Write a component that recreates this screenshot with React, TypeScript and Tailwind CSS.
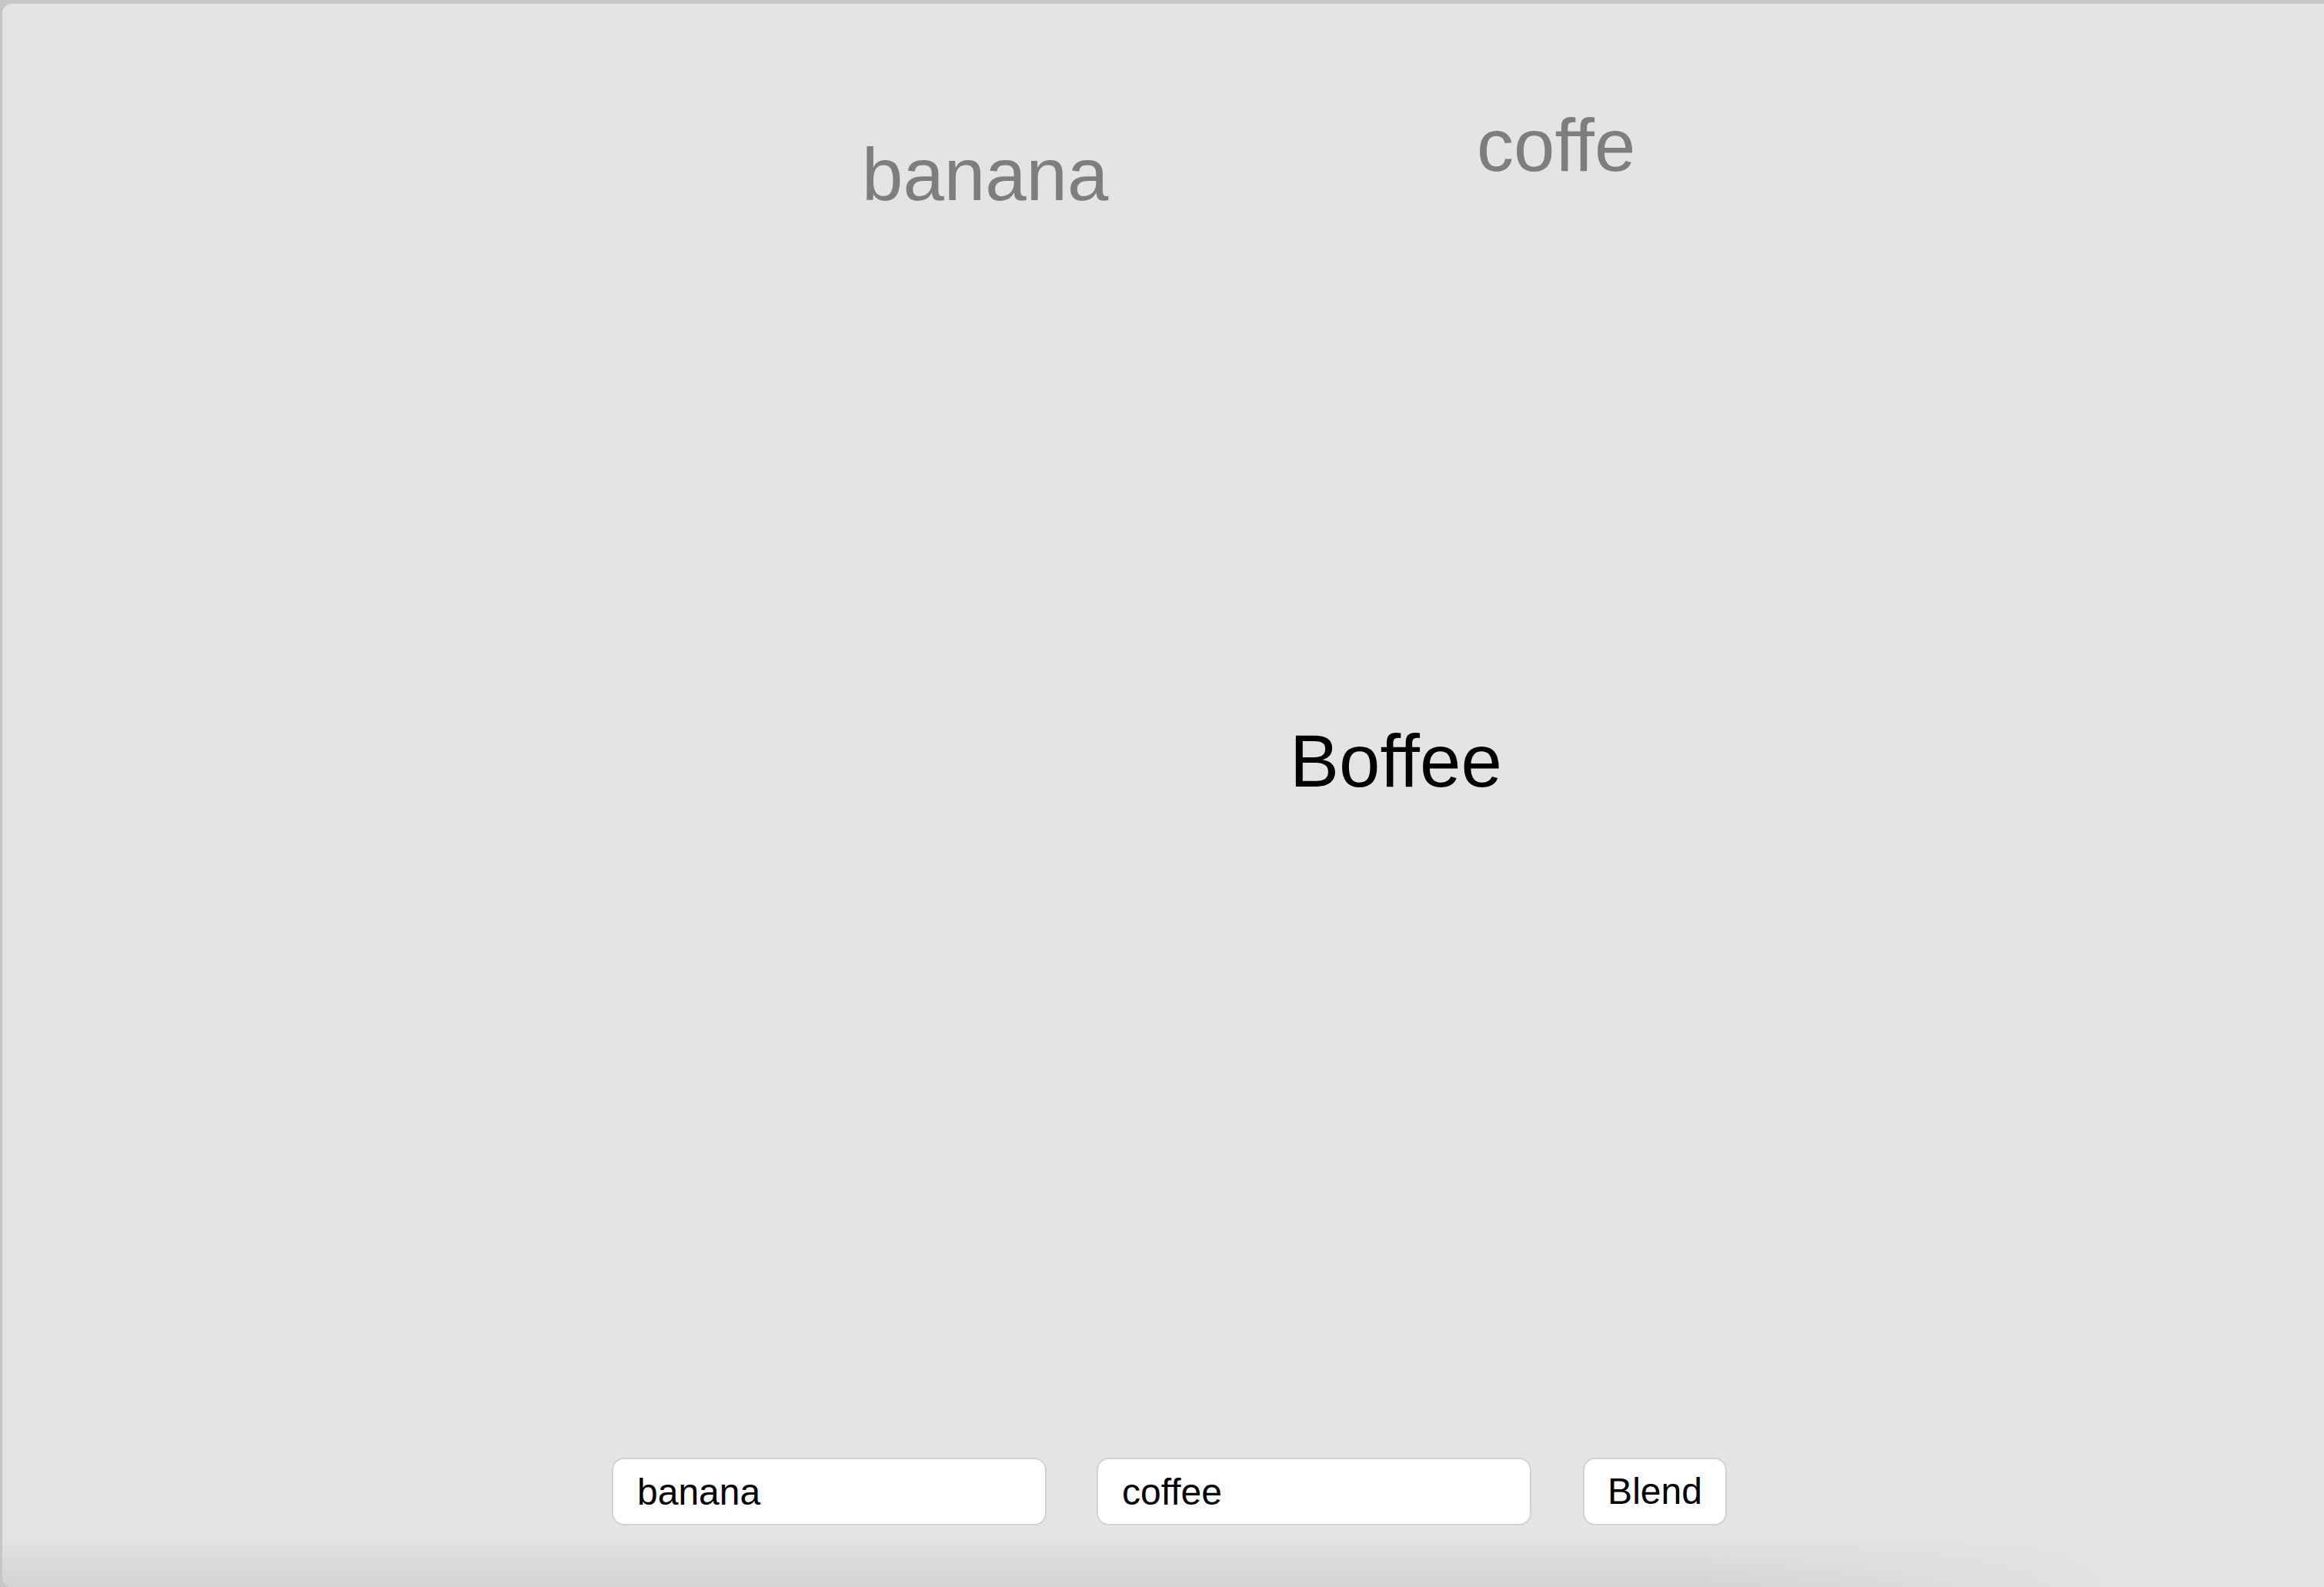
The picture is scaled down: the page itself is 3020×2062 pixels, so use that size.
import React from "react";

// Word blender: two source words drift at the top, the blended word floats in the middle.
const words = [
    { text: "banana", className: "left-[1117px] top-[174px] text-[#7e7e7e]" },
    { text: "coffe", className: "left-[1916px] top-[136px] text-[#7e7e7e]" },
    { text: "Boffee", className: "left-[1673px] top-[936px] text-black" },
];

function App() {
    return (
        <div className="h-[2062px] w-[3020px] overflow-hidden bg-[#c6c6c6] pl-[3px] pt-[5px] font-['Liberation_Sans',Arial,sans-serif] [font-variant-ligatures:none]">
            <div className="relative flex h-[2057px] flex-col overflow-hidden rounded-l-[12px] bg-[#e4e4e4]">
                {words.map((w) => (
                    <span
                        key={w.text}
                        className={"absolute whitespace-nowrap text-[96px] leading-none " + w.className}
                    >
                        {w.text}
                    </span>
                ))}

                <div className="flex-1" />

                <div className="relative z-10 flex items-center justify-center gap-[65px] pb-[80px] pl-[16px]">
                    <input
                        defaultValue="banana"
                        className="h-[88px] w-[565px] rounded-[16px] border-2 border-[#d2d2d2] bg-white pl-[31px] text-[48px] text-black outline-none"
                    />
                    <input
                        defaultValue="coffee"
                        className="h-[88px] w-[565px] rounded-[16px] border-2 border-[#d2d2d2] bg-white pl-[31px] text-[48px] text-black outline-none"
                    />
                    <button className="ml-[2px] h-[88px] w-[187px] rounded-[16px] border-2 border-[#d2d2d2] bg-white text-[48px] text-black">
                        Blend
                    </button>
                </div>

                {/* soft shadow along the bottom edge */}
                <div className="pointer-events-none absolute bottom-0 left-0 h-[70px] w-[2760px] bg-[linear-gradient(to_top,#d3d3d3,rgba(228,228,228,0))] [mask-image:linear-gradient(to_right,black_80%,transparent)]" />
            </div>
        </div>
    );
}

export default App;
